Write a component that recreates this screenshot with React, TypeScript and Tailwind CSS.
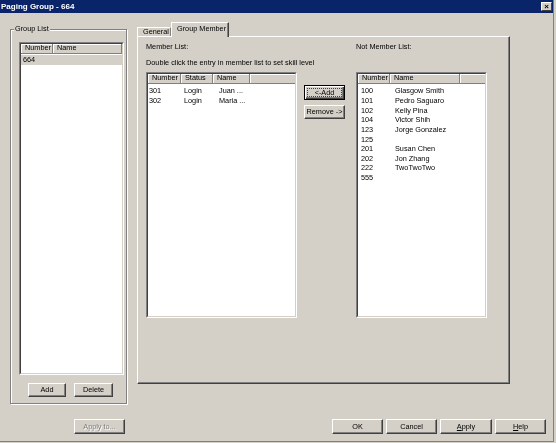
import type { ReactNode } from "react";

const FONT = "font-['Liberation_Sans',Arial,sans-serif] text-[7.3px] text-black";

const notMembers = [
  ["100", "Glasgow Smith"],
  ["101", "Pedro Saguaro"],
  ["102", "Kelly Pina"],
  ["104", "Victor Shih"],
  ["123", "Jorge Gonzalez"],
  ["125", ""],
  ["201", "Susan Chen"],
  ["202", "Jon Zhang"],
  ["222", "TwoTwoTwo"],
  ["555", ""],
];

const members = [
  ["301", "Login", "Juan ..."],
  ["302", "Login", "Maria ..."],
];

function Btn({
  children,
  className = "",
  disabled = false,
}: {
  children: ReactNode;
  className?: string;
  disabled?: boolean;
}) {
  return (
    <div
      className={`flex items-center justify-center leading-none bg-[#d4d0c8] border border-t-white border-l-white border-r-[#404040] border-b-[#404040] shadow-[inset_-1px_-1px_0_#808080] ${
        disabled ? "text-[#808080] [text-shadow:1px_1px_0_#fff]" : ""
      } ${className}`}
    >
      {children}
    </div>
  );
}

function Sunken({ className = "", children }: { className?: string; children: ReactNode }) {
  return (
    <div
      className={`border border-t-[#808080] border-l-[#808080] border-r-white border-b-white ${className}`}
    >
      <div className="h-full bg-white border border-t-[#404040] border-l-[#404040] border-r-[#d4d0c8] border-b-[#d4d0c8] flex flex-col overflow-hidden">
        {children}
      </div>
    </div>
  );
}

function Header({ cols }: { cols: [string, string][] }) {
  return (
    <div className="flex h-[10px] shrink-0 bg-[#d4d0c8] border-b border-[#808080]">
      {cols.map(([label, w]) => (
        <div
          key={label}
          className={`${w} h-full flex items-center pl-[4px] border-r border-[#808080] shadow-[inset_1px_1px_0_#fff]`}
        >
          {label}
        </div>
      ))}
      <div className="flex-1 h-full shadow-[inset_1px_1px_0_#fff]" />
    </div>
  );
}

export default function App() {
  return (
    <div
      className={`w-[556px] h-[443px] bg-[#d4d0c8] pr-[2px] pb-[1px] opacity-[0.999] [will-change:transform] ${FONT}`}
    >
      <div className="h-full border-r border-b border-[#808080] flex flex-col">
        {/* title bar */}
        <div className="h-[13px] shrink-0 bg-[#0a246a] flex items-center justify-between pl-[1px] pr-[1px]">
          <span className="text-white font-bold text-[8px]">Paging Group - 664</span>
          <div className="w-[11px] h-[9px] bg-[#d4d0c8] border border-t-white border-l-white border-r-[#404040] border-b-[#404040] flex items-center justify-center text-[8px] leading-none font-bold">
            ×
          </div>
        </div>

        <div className="flex h-[391px] shrink-0">
          {/* Group List */}
          <div className="relative ml-[10px] mt-[16px] w-[117px] h-[375px] border border-[#808080] shadow-[inset_1px_1px_0_#fff,1px_1px_0_#fff] pl-[8px] pr-[2px] pt-[12px]">
            <span className="absolute -top-[6px] left-[3px] bg-[#d4d0c8] px-[1px] leading-[10px]">
              Group List
            </span>
            <Sunken className="h-[333px]">
              <Header cols={[["Number", "w-[32px]"], ["Name", "w-[69px]"]]} />
              <div className="pt-[1px]">
                <div className="w-[101px] h-[10px] bg-[#d4d0c8] flex items-center pl-[2px]">664</div>
              </div>
            </Sunken>
            <div className="flex gap-[8px] mt-[8px] pl-[9px]">
              <Btn className="w-[38px] h-[14px]">Add</Btn>
              <Btn className="w-[39px] h-[14px]">Delete</Btn>
            </div>
          </div>

          {/* Tab control */}
          <div className="ml-[10px] mt-[9px] w-[373px] flex flex-col">
            <div className="flex items-end h-[14px]">
              <div className="w-[34px] h-[9px] border-t border-l border-white border-r border-r-[#808080] flex items-center pl-[5px]">
                General
              </div>
              <div className="relative z-10 w-[58px] h-[15px] -mb-[1px] bg-[#d4d0c8] border-t border-l border-white border-r border-r-[#404040] shadow-[inset_-1px_0_0_#808080] flex items-center pl-[5px] pb-[1px]">
                Group Member
              </div>
            </div>
            <div className="h-[348px] border border-t-white border-l-white border-r-[#404040] border-b-[#404040]">
              <div className="h-full border-r border-b border-[#808080] pl-[8px] pt-[5px]">
                <div className="flex h-[10px] items-center">
                  <span className="w-[210px]">Member List:</span>
                  <span>Not Member List:</span>
                </div>
                <div className="h-[10px] mt-[6px] flex items-center">
                  Double click the entry in member list to set skill level
                </div>
                <div className="flex mt-[4px]">
                  <Sunken className="w-[151px] h-[246px]">
                    <Header
                      cols={[
                        ["Number", "w-[33px]"],
                        ["Status", "w-[32px]"],
                        ["Name", "w-[37px]"],
                      ]}
                    />
                    <div className="pt-[3px]">
                      {members.map(([n, s, name]) => (
                        <div key={n} className="flex h-[9.7px] items-center">
                          <span className="w-[36px] pl-[1px]">{n}</span>
                          <span className="w-[35px]">{s}</span>
                          <span>{name}</span>
                        </div>
                      ))}
                    </div>
                  </Sunken>
                  <div className="ml-[7px] w-[41px] flex flex-col">
                    <div className="mt-[13px] w-[41px] h-[15px] border border-black bg-[#d4d0c8] shadow-[inset_1px_1px_0_#fff,inset_-1px_-1px_0_#404040,inset_-2px_-2px_0_#808080] p-[2px]">
                      <div className="h-full border border-dotted border-[#404040] flex items-center justify-center leading-none">
                        &lt;-Add
                      </div>
                    </div>
                    <Btn className="mt-[5px] h-[14px]">Remove -&gt;</Btn>
                  </div>
                  <Sunken className="ml-[11px] w-[131px] h-[246px]">
                    <Header cols={[["Number", "w-[32px]"], ["Name", "w-[70px]"]]} />
                    <div className="pt-[3px]">
                      {notMembers.map(([n, name]) => (
                        <div key={n} className="flex h-[9.65px] items-center">
                          <span className="w-[37px] pl-[3px]">{n}</span>
                          <span>{name}</span>
                        </div>
                      ))}
                    </div>
                  </Sunken>
                </div>
              </div>
            </div>
          </div>
        </div>

        {/* bottom buttons */}
        <div className="flex mt-[15px] h-[15px]">
          <Btn disabled className="ml-[74px] w-[51px] h-[15px]">
            Apply to...
          </Btn>
          <div className="flex gap-[3px] ml-[207px]">
            <Btn className="w-[51px] h-[15px]">OK</Btn>
            <Btn className="w-[51px] h-[15px]">Cancel</Btn>
            <Btn className="w-[52px] h-[15px]">
              <span>
                <span className="underline">A</span>pply
              </span>
            </Btn>
            <Btn className="w-[51px] h-[15px]">
              <span>
                <span className="underline">H</span>elp
              </span>
            </Btn>
          </div>
        </div>
      </div>
    </div>
  );
}
